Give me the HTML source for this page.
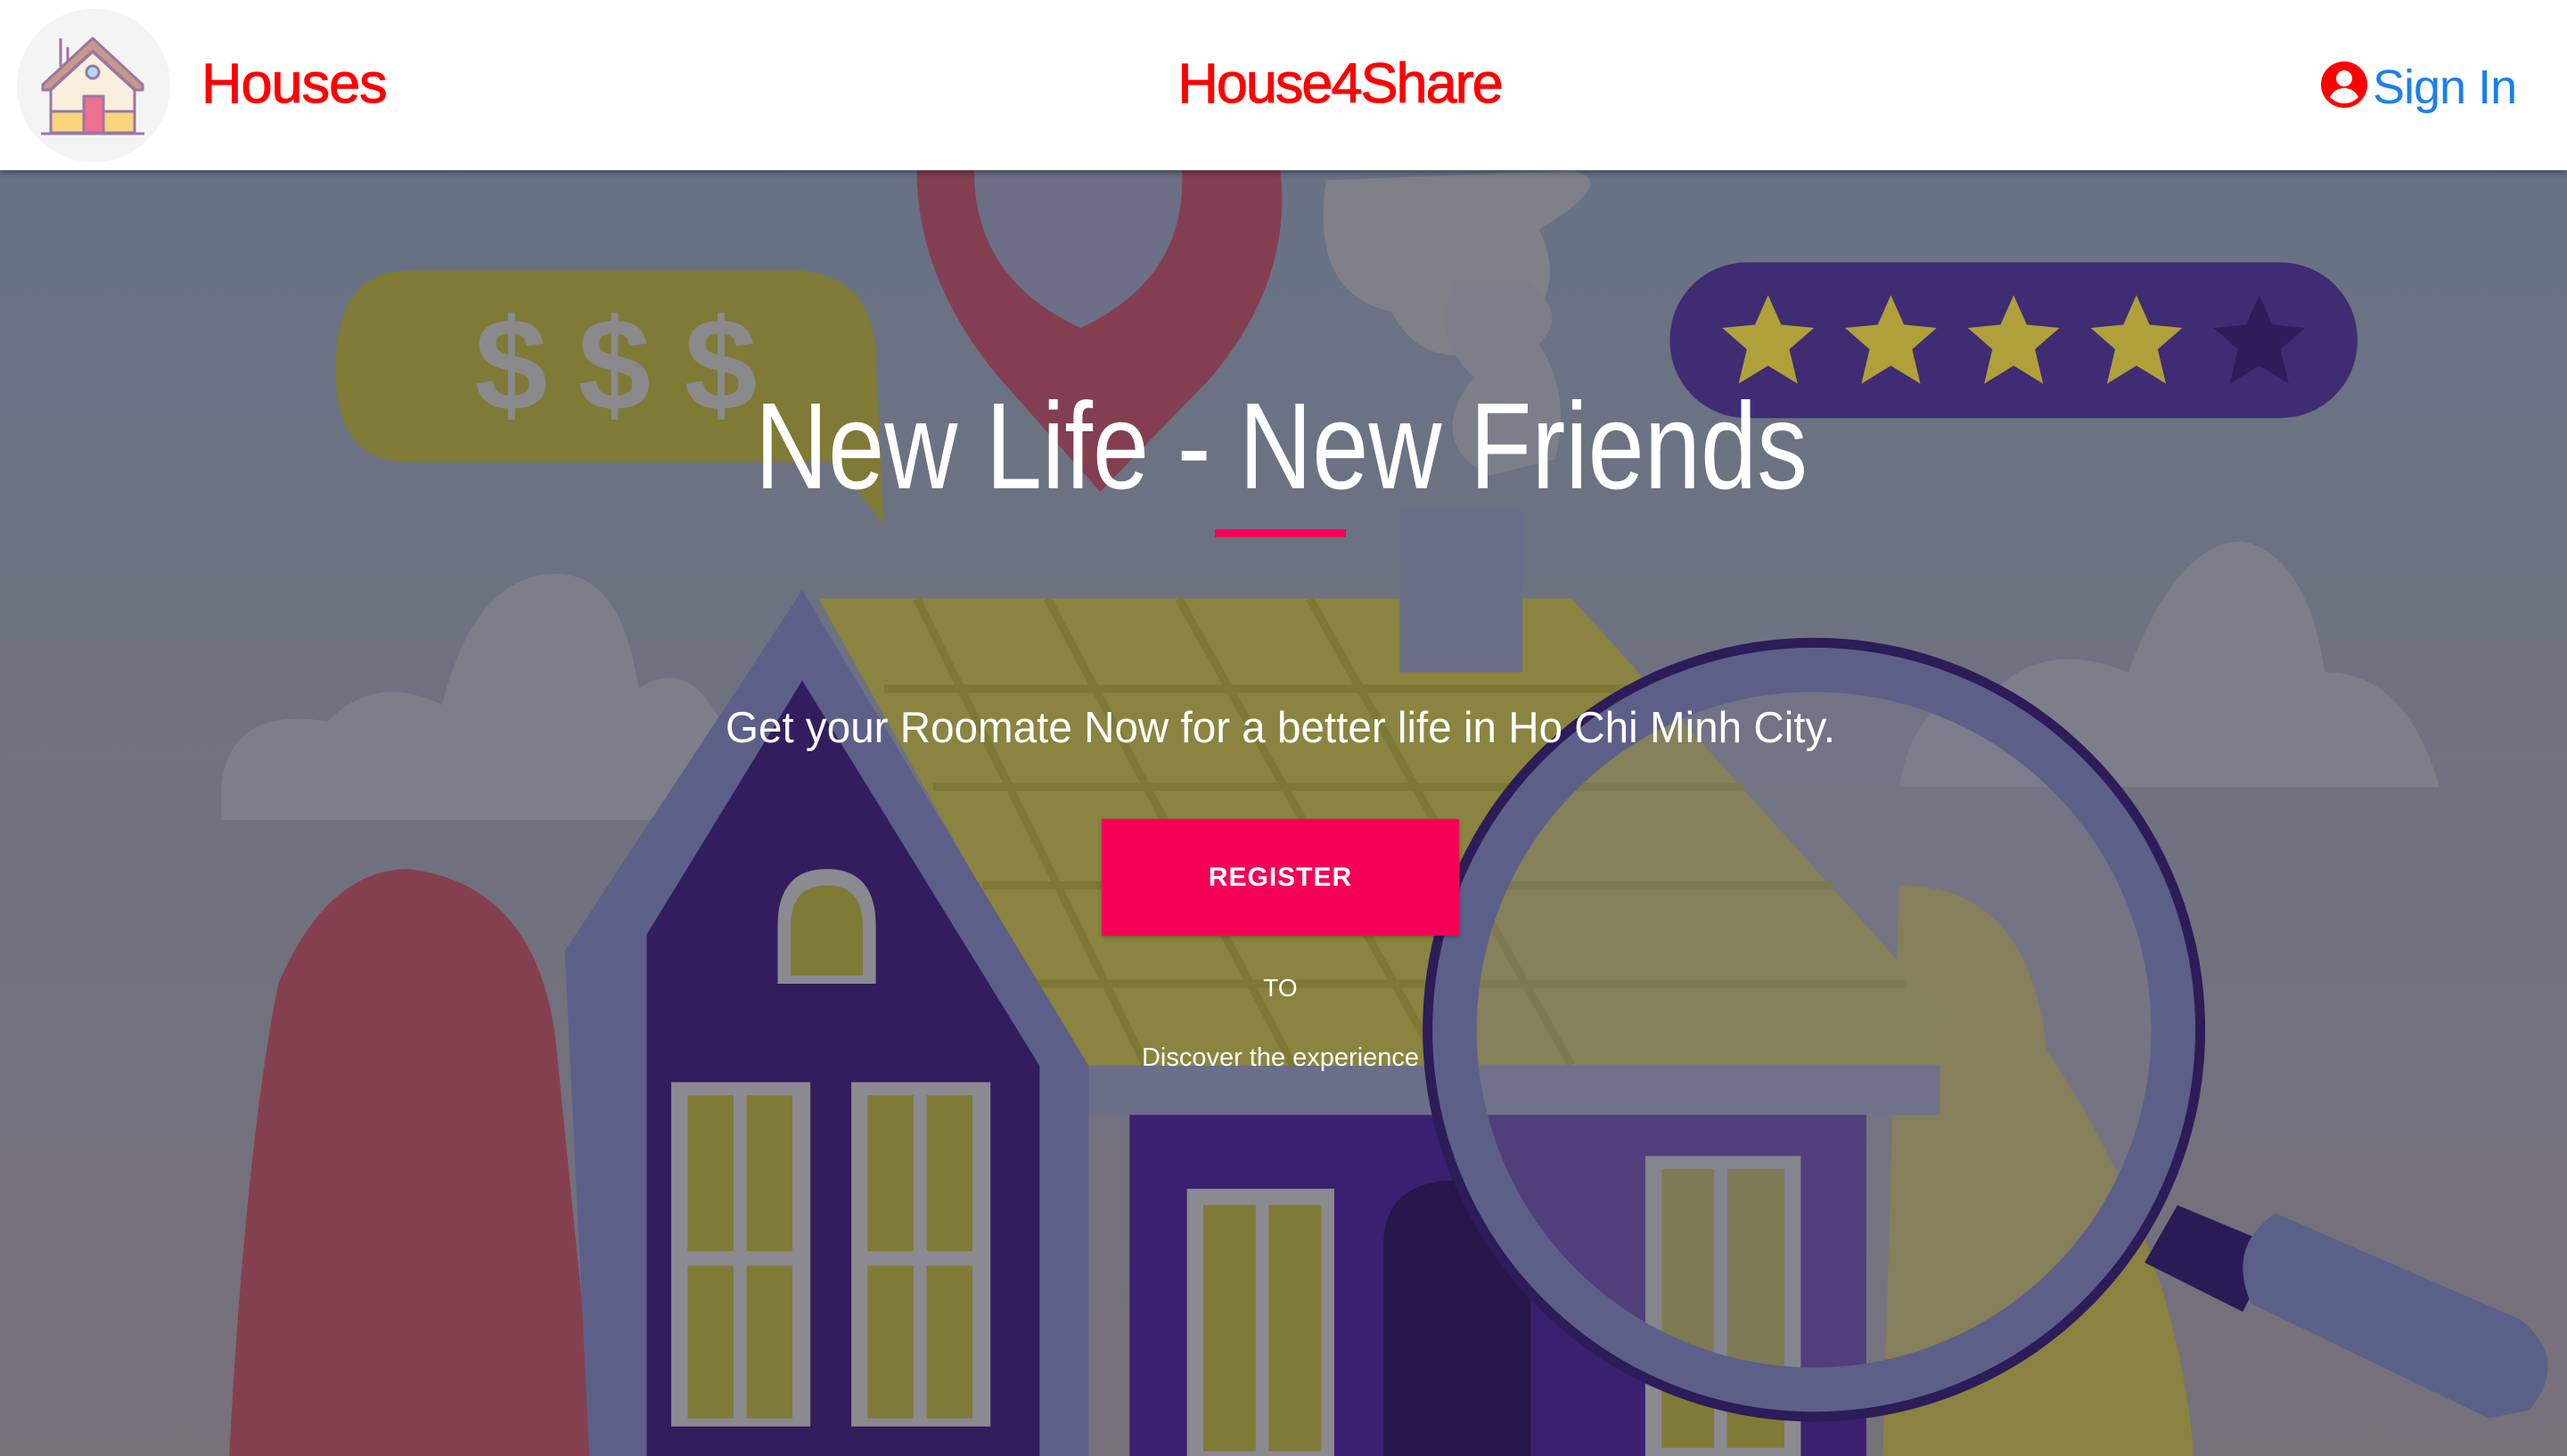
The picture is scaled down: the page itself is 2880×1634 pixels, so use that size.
<!DOCTYPE html>
<html><head><meta charset="utf-8"><style>
html,body{margin:0;padding:0;width:2880px;height:1634px;overflow:hidden;font-family:"Liberation Sans",sans-serif;background:#6e7280}
.hdr{position:absolute;left:0;top:0;width:2880px;height:191px;background:#fff;box-shadow:0 3px 6px rgba(0,0,0,.35);z-index:5}
.t{position:absolute;white-space:nowrap}
</style></head><body>
<svg style="position:absolute;left:0;top:0" width="2880" height="1634" viewBox="0 0 1568 888" preserveAspectRatio="none">
<defs><linearGradient id="bg" x1="0" y1="0" x2="0" y2="1"><stop offset="0" stop-color="#667286"/><stop offset="1" stop-color="#77717a"/></linearGradient></defs>
<rect width="1568" height="888" fill="url(#bg)"/>
<path d="M135 500 L135 480 Q140 430 200 440 Q230 410 270 430 Q290 350 340 350 Q380 350 390 420 Q420 400 440 440 L440 500 Z" fill="#7c7f8a"/>
<path d="M1160 480 Q1170 420 1220 420 Q1250 390 1300 410 Q1330 330 1370 330 Q1410 340 1420 410 Q1470 410 1490 480 Z" fill="#7c7f8a"/>
<path d="M810 110 Q800 180 850 190 Q870 230 920 210 Q960 180 940 140 Q990 110 960 104 Z" fill="#808089"/>
<path d="M890 170 Q870 200 900 230 Q870 270 910 290 L950 280 Q960 240 940 210 Q960 190 930 170 Z" fill="#7c7f8a"/>
<path d="M250 165 L490 165 Q535 170 535 220 L540 320 L510 282 L250 282 Q205 282 205 225 Q205 165 250 165 Z" fill="#7f7a36"/>
<text x="290" y="250" font-family="Liberation Sans" font-weight="bold" font-size="80" fill="#8a8a8c">$</text>
<text x="353" y="250" font-family="Liberation Sans" font-weight="bold" font-size="80" fill="#8a8a8c">$</text>
<text x="418" y="250" font-family="Liberation Sans" font-weight="bold" font-size="80" fill="#8a8a8c">$</text>
<path d="M560 104 L782 104 Q790 170 740 230 L672 300 L610 230 Q560 170 560 104 Z" fill="#843e52"/>
<path d="M595 104 L722 104 Q725 170 660 200 Q595 170 595 104 Z" fill="#6c6f85"/>
<rect x="1020" y="160" width="420" height="95" rx="47" fill="#3f2c73"/>
<g fill="#b0a03a">
<path id="st" d="M1080 180 L1088 198 L1108 200 L1093 213 L1098 234 L1080 223 L1062 234 L1067 213 L1052 200 L1072 198 Z"/>
<use href="#st" x="75"/><use href="#st" x="150"/><use href="#st" x="225"/>
</g>
<use href="#st" x="300" fill="#2e1d5a"/>
<path d="M250 530 Q330 540 340 640 L365 888 L140 888 Q150 700 170 600 Q200 530 250 530 Z" fill="#85404f"/>
<path d="M1160 540 Q1240 540 1250 640 Q1330 760 1340 888 L1150 888 Z" fill="#8a8240"/>
<path d="M500 365 L960 365 L1190 620 L1175 650 L660 650 Z" fill="#8a8440"/>
<g stroke="#7d7834" stroke-width="5" fill="none"><path d="M560 365 L700 650 M640 365 L790 650 M720 365 L880 650 M800 365 L960 650"/><path d="M540 420 L1010 420 M570 480 L1065 480 M600 540 L1120 540 M630 600 L1165 600"/></g>
<path d="M490 360 L345 580 L360 888 L665 888 L665 650 Z" fill="#5c6088"/>
<path d="M490 415 L395 570 L395 888 L635 888 L635 650 Z" fill="#321d5e"/>
<rect x="665" y="650" width="520" height="30" fill="#6a6e88"/>
<rect x="690" y="680" width="450" height="208" fill="#3a2070"/>
<rect x="855" y="310" width="75" height="100" fill="#6a6e8a"/>
<g fill="#8a8a90"><rect x="410" y="660" width="85" height="210"/><rect x="520" y="660" width="85" height="210"/><rect x="725" y="725" width="90" height="163"/><rect x="1005" y="705" width="95" height="183"/><path d="M475 600 L475 565 Q475 530 505 530 Q535 530 535 565 L535 600 Z"/></g>
<g fill="#7f7a36"><rect x="420" y="668" width="28" height="95"/><rect x="456" y="668" width="28" height="95"/><rect x="420" y="772" width="28" height="93"/><rect x="456" y="772" width="28" height="93"/>
<rect x="530" y="668" width="28" height="95"/><rect x="566" y="668" width="28" height="95"/><rect x="530" y="772" width="28" height="93"/><rect x="566" y="772" width="28" height="93"/>
<rect x="735" y="735" width="32" height="150"/><rect x="775" y="735" width="32" height="150"/><rect x="1015" y="713" width="32" height="170"/><rect x="1055" y="713" width="35" height="170"/>
<path d="M483 595 L483 565 Q483 540 505 540 Q527 540 527 565 L527 595 Z"/></g>
<path d="M845 888 L845 760 Q845 720 890 720 Q935 720 935 760 L935 888 Z" fill="#26164a"/>
<path d="M1330 735 L1390 760 L1370 800 L1310 770 Z" fill="#2a1a55"/>
<path d="M1390 740 L1540 805 Q1570 830 1545 860 L1520 865 L1375 795 Q1360 760 1390 740 Z" fill="#5a6088"/>
<circle cx="1108" cy="628" r="220" fill="#7a7c8e" fill-opacity="0.35"/>
<circle cx="1108" cy="628" r="220" fill="none" stroke="#5c6088" stroke-width="28"/>
<circle cx="1108" cy="628" r="236" fill="none" stroke="#2c1c58" stroke-width="6"/>
</svg>
<div class="hdr">
<div style="position:absolute;left:19px;top:10px;width:172px;height:172px;border-radius:50%;background:#f4f4f4"></div>
<svg style="position:absolute;left:40px;top:35px" width="130" height="120" viewBox="0 0 130 120">
<g stroke="#9a76a6" stroke-width="3" stroke-linejoin="round">
<path d="M28 8 L28 40 M36 18 L36 34" fill="none"/>
<path d="M8 60 L64 8 L120 60 L120 66 L112 66 L64 22 L16 66 L8 66 Z" fill="#c89a86"/>
<path d="M17 66 L64 23 L111 66 L111 114 L17 114 Z" fill="#faeedd"/>
<rect x="17" y="90" width="94" height="24" fill="#f7d57a"/>
<rect x="54" y="73" width="22" height="41" fill="#ef6f91"/>
<circle cx="64" cy="46" r="7" fill="#aedcf5"/>
<path d="M6 115 L122 115" fill="none"/>
</g></svg>
<div class="t" style="left:226px;top:58px;font-size:63px;color:#ff0000;-webkit-text-stroke:1px #ff0000;letter-spacing:-1px">Houses</div>
<div class="t" style="left:1303px;top:58px;width:400px;text-align:center;font-size:63px;color:#ff0000;-webkit-text-stroke:1px #ff0000;letter-spacing:-2px">House4Share</div>
<svg style="position:absolute;left:2603px;top:68px" width="54" height="54" viewBox="0 0 54 54">
<circle cx="27" cy="27" r="26" fill="#ff0000"/><circle cx="27" cy="20" r="9" fill="#fff"/><path d="M11 41 Q16 31 27 31 Q38 31 43 41 Q36 48 27 48 Q18 48 11 41 Z" fill="#fff"/></svg>
<div class="t" style="left:2662px;top:67px;font-size:54px;color:#1a7ff0;letter-spacing:-1px">Sign In</div>
</div>
<svg style="position:absolute;left:0;top:0" width="2880" height="1634">
<text x="847" y="548" font-family="Liberation Sans" font-size="138" fill="#fff" textLength="1181" lengthAdjust="spacingAndGlyphs">New Life - New Friends</text>
<text x="814" y="833" font-family="Liberation Sans" font-size="49" fill="#fff" textLength="1245" lengthAdjust="spacingAndGlyphs">Get your Roomate Now for a better life in Ho Chi Minh City.</text>
</svg>
<div style="position:absolute;left:1363px;top:594px;width:147px;height:9px;background:#f50057"></div>
<div style="position:absolute;left:1236px;top:919px;width:401px;height:131px;background:#f50057;box-shadow:0 2px 4px rgba(0,0,0,.25)"></div>
<div class="t" style="left:1236px;top:968px;width:401px;text-align:center;font-size:30px;color:#fff;font-weight:bold;letter-spacing:1px">REGISTER</div>
<div class="t" style="left:1236px;top:1093px;width:401px;text-align:center;font-size:28px;color:#fff">TO</div>
<div class="t" style="left:1186px;top:1171px;width:501px;text-align:center;font-size:29px;color:#fff">Discover the experience</div>
</body></html>
